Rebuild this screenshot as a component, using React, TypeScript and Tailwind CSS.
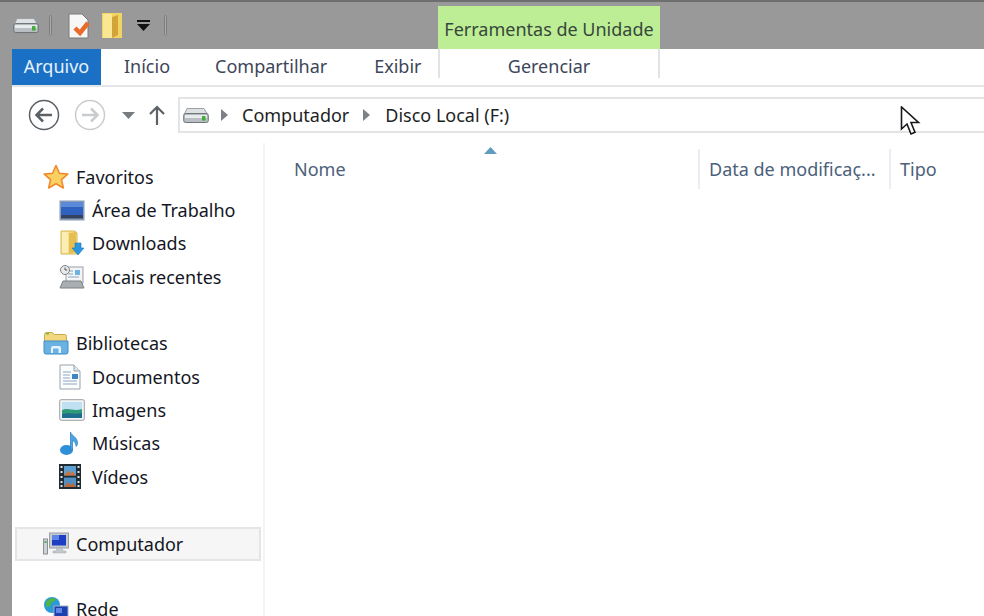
import { ReactNode } from "react";

const DriveIcon = ({ w = 26 }: { w?: number }) => (
  <svg width={w} height={w * 0.62} viewBox="0 0 26 16">
    <path d="M4 1.5h17l4 6.5H1z" fill="#dfe2e4" stroke="#9a9ea2" />
    <rect x="0.7" y="6.5" width="24.6" height="9" rx="2" fill="#b9bec2" stroke="#6d7276" />
    <rect x="2" y="8" width="22" height="3" fill="#e9ecee" />
    <rect x="19" y="9" width="3.5" height="4.5" fill="#3fae3a" />
  </svg>
);

const StarIcon = () => (
  <svg width="26" height="26" viewBox="0 0 26 26">
    <path d="M13 1.5l3.4 7.7 8.4.9-6.3 5.6 1.8 8.3-7.3-4.3-7.3 4.3 1.8-8.3L1.2 10.1l8.4-.9z" fill="#fbd063" stroke="#ef8a2e" strokeWidth="1.6" strokeLinejoin="round" />
  </svg>
);

const DesktopIcon = () => (
  <svg width="26" height="21" viewBox="0 0 26 21">
    <rect x="0.5" y="0.5" width="25" height="20" fill="#8b9cb8" />
    <rect x="2" y="2" width="22" height="13" fill="#2f61c0" />
    <rect x="2" y="2" width="22" height="5" fill="#5d8ad8" />
    <rect x="2" y="15" width="22" height="3.5" fill="#33435f" />
  </svg>
);

const FolderIcon = ({ children }: { children?: ReactNode }) => (
  <svg width="26" height="26" viewBox="0 0 26 26">
    <path d="M2 1h14l2 2v21H2z" fill="#f6df8a" stroke="#d9b95a" />
    <path d="M10 3l7-1v20l-7 2z" fill="#e6bf50" />
    <rect x="3" y="2" width="6" height="21" fill="#fbedb4" />
    {children}
  </svg>
);

const RecentIcon = () => (
  <svg width="26" height="26" viewBox="0 0 26 26">
    <rect x="7" y="3" width="17" height="16" fill="#f2f4f6" stroke="#9aa0a6" />
    <rect x="16" y="6" width="5" height="5" fill="#6fb3e0" />
    <path d="M9 7h5M9 10h5M9 13h11" stroke="#8fa6bb" />
    <circle cx="6" cy="6" r="4.5" fill="#e8eaec" stroke="#7c8187" />
    <path d="M6 3.5V6h2.2" stroke="#555" fill="none" />
    <path d="M4 17h18l3 7H1z" fill="#a9aeb3" stroke="#7d8287" />
  </svg>
);

const LibraryIcon = () => (
  <svg width="26" height="24" viewBox="0 0 26 24">
    <path d="M1.5 3.5a2 2 0 012-2h6l2 2h10a2 2 0 012 2v14h-22z" fill="#f3d77e" stroke="#c8a950" />
    <rect x="3" y="2" width="3" height="1.5" fill="#6fc04a" />
    <path d="M1 10h24v11a2 2 0 01-2 2H3a2 2 0 01-2-2z" fill="#6ab2e2" stroke="#3f8cc4" />
    <path d="M8 22v-5a2 2 0 012-2h6a2 2 0 012 2v5h-2.500v-4.500h-5.500V22z" fill="#e6f3fb" />
  </svg>
);

const DocIcon = () => (
  <svg width="22" height="26" viewBox="0 0 22 26">
    <path d="M1 1h14l6 6v18H1z" fill="#fbfcfd" stroke="#9aa2a9" />
    <path d="M15 1v6h6" fill="#dfe6ec" stroke="#9aa2a9" />
    <path d="M4 8h8M4 11h7M4 14h7M4 17h14M4 20h14" stroke="#8ba7c0" />
    <rect x="13" y="10" width="6" height="5" fill="#3d86c6" />
  </svg>
);

const PictureIcon = () => (
  <svg width="26" height="22" viewBox="0 0 26 22">
    <rect x="0.7" y="0.7" width="24.600" height="20.600" rx="1.500" fill="#f2f3f4" stroke="#9a9ea3" />
    <rect x="3" y="3" width="20" height="16" fill="#bfe0f3" />
    <path d="M3 11c6-3 12 2 20-1v9H3z" fill="#2f9a76" />
    <path d="M3 15c7-2 12 1 20-1v5H3z" fill="#1c6d8e" />
  </svg>
);

const MusicIcon = () => (
  <svg width="22" height="26" viewBox="0 0 22 26">
    <ellipse cx="7.500" cy="20" rx="6.500" ry="5" fill="#2f8fd8" />
    <path d="M11.500 20V2c1 4 7 5 7 11 0 2-.8 3-1.500 3.500.3-3-2-5.500-3.500-6V20z" fill="#4aa3e4" stroke="#2b7dbf" strokeWidth="0.700" />
  </svg>
);

const FilmIcon = () => (
  <svg width="22" height="25" viewBox="0 0 22 25">
    <rect x="0" y="0" width="22" height="25" fill="#1f2b30" />
    <rect x="5" y="2" width="12" height="9.500" fill="#5d9fd0" />
    <path d="M5 11.500l4-5 3 3 2-2 3 4z" fill="#c9743c" />
    <rect x="5" y="13.500" width="12" height="9.500" fill="#4f8fc4" />
    <path d="M5 23l4-5 3 3 2-2 3 4z" fill="#b9683a" />
    {[2, 7, 12, 17, 21].map((y) => (
      <g key={y}>
        <rect x="1.500" y={y} width="2" height="2" fill="#d9e6ea" />
        <rect x="18.500" y={y} width="2" height="2" fill="#d9e6ea" />
      </g>
    ))}
  </svg>
);

const ComputerIcon = () => (
  <svg width="26" height="24" viewBox="0 0 26 24">
    <rect x="0.500" y="7" width="4" height="15" fill="#cdd2d6" stroke="#8a9095" />
    <rect x="1.500" y="9" width="2" height="2" fill="#49b04a" />
    <rect x="6.500" y="1" width="19" height="15" fill="#c6cbd0" stroke="#9aa0a5" />
    <rect x="9" y="3" width="14" height="10.500" fill="#1d3fc4" />
    <rect x="9" y="3" width="7" height="5" fill="#5f86e6" />
    <path d="M14 16h5l1 3h3v2H10v-2h3z" fill="#c4c9cd" stroke="#a0a5aa" strokeWidth="0.500" />
  </svg>
);

const NetworkIcon = () => (
  <svg width="26" height="26" viewBox="0 0 26 26">
    <circle cx="9" cy="9" r="8" fill="#2a9ad8" />
    <path d="M3 6c3-4 7-5 10-3-1 3-4 2-5 5s-3 4-5 2z" fill="#4fb548" />
    <rect x="11" y="10" width="14" height="14" fill="#1d3fb0" stroke="#9fb0c6" />
    <rect x="13" y="12" width="6" height="5" fill="#5f86e6" />
  </svg>
);

const NavItem = ({ icon, label, sub }: { icon: ReactNode; label: string; sub?: boolean }) => (
  <div className={`flex h-[33.400px] items-center ${sub ? "pl-[47px]" : "pl-[31px]"}`}>
    <span className="flex w-[34px] shrink-0 items-center justify-start">{icon}</span>
    <span className={`whitespace-nowrap text-[#14161f] ${sub ? "-ml-[1px]" : "-ml-[1px]"}`}>{label}</span>
  </div>
);

const ColumnHead = ({ label, className }: { label: string; className: string }) => (
  <div className={`flex h-[40px] shrink-0 items-center whitespace-nowrap text-[#4c607a] ${className}`}>{label}</div>
);

export default function App() {
  return (
    <div
      className="relative flex h-[616px] w-[984px] flex-col overflow-hidden bg-[#999999] text-[18px] leading-none"
      style={{ fontFamily: '"Noto Sans", sans-serif' }}
    >
      {/* title bar */}
      <div className="h-[2px] shrink-0 bg-[#6e6e6e]" />
      <div className="flex h-[47px] shrink-0 items-center pl-[13px]">
        <DriveIcon />
        <div className="ml-[10px] h-[21px] w-[3px] rounded-sm border border-[#7d7d7d] bg-[#ababab]" />
        <svg className="ml-[15px]" width="23" height="26" viewBox="0 0 23 26">
          <path d="M2 1h13l6 6v18H2z" fill="#f7f7f7" stroke="#7b7b7b" />
          <path d="M8 15l5 5 8-10" fill="none" stroke="#ea6a2c" strokeWidth="4.500" />
        </svg>
        <svg className="ml-[12px]" width="20" height="26" viewBox="0 0 20 26">
          <rect x="0" y="0" width="20" height="25" fill="#f1d463" />
          <rect x="1" y="1" width="9" height="24" fill="#f9e791" />
          <path d="M10 4l6-2v20l-6 3z" fill="#d3a43a" />
        </svg>
        <svg className="ml-[15px]" width="13" height="12" viewBox="0 0 13 12">
          <rect x="0" y="0" width="13" height="2" fill="#111" />
          <path d="M0 4h13l-6.500 7z" fill="#111" />
        </svg>
        <div className="ml-[14px] h-[21px] w-[3px] rounded-sm border border-[#7d7d7d] bg-[#ababab]" />
      </div>

      <div className="ml-[12px] flex min-h-0 flex-1 flex-col bg-white">
        {/* ribbon tabs */}
        <div className="flex h-[38px] shrink-0 items-stretch border-b-2 border-[#e4e5e6] text-[#3c4658]">
          <div className="flex w-[89px] shrink-0 items-center justify-center bg-[#1a70c5] pb-[2px] text-[#e6f0fa]">Arquivo</div>
          <div className="flex w-[337px] shrink-0 items-center pb-[2px]">
            <span className="ml-[23px]">Início</span>
            <span className="ml-[45px]">Compartilhar</span>
            <span className="ml-[47px]">Exibir</span>
          </div>
          <div className="relative flex w-[222px] shrink-0 items-center justify-center pb-[2px]">
            <div className="absolute -top-[43px] left-0 flex h-[43px] w-full items-center justify-center bg-[#bdee96] pt-[3px] text-[#37473a]">
              Ferramentas de Unidade
            </div>
            <div className="absolute left-0 top-0 h-[29px] w-[2px] bg-[#e2e3e4]" />
            <div className="absolute right-0 top-0 h-[29px] w-[2px] bg-[#e2e3e4]" />
            Gerenciar
          </div>
        </div>

        {/* address row */}
        <div className="flex h-[56px] shrink-0 items-center pl-[16px]">
          <svg width="32" height="32" viewBox="0 0 32 32" fill="none" stroke="#5b6167">
            <circle cx="16" cy="16" r="14.500" strokeWidth="1.500" />
            <path d="M24 16H9M15 9.500L8.500 16l6.500 6.500" strokeWidth="2.500" />
          </svg>
          <svg className="ml-[14px]" width="32" height="32" viewBox="0 0 32 32" fill="none" stroke="#c9cccf">
            <circle cx="16" cy="16" r="14.500" strokeWidth="1.500" />
            <path d="M8 16h15M17 9.500l6.500 6.500-6.500 6.500" strokeWidth="2.500" />
          </svg>
          <svg className="ml-[16px]" width="13" height="7" viewBox="0 0 13 7">
            <path d="M0 0h13L6.500 7z" fill="#777c81" />
          </svg>
          <svg className="ml-[14px]" width="16" height="20" viewBox="0 0 16 20" fill="none" stroke="#5c6268" strokeWidth="2.200">
            <path d="M8 20V2M1 9l7-7 7 7" />
          </svg>
          <div className="ml-[13px] flex h-[36px] flex-1 items-center border-2 border-r-0 border-[#e3e4e5] pl-[3px] text-[#1d1f24]">
            <DriveIcon />
            <svg className="ml-[12px]" width="7" height="12" viewBox="0 0 7 12"><path d="M0 0l7 6-7 6z" fill="#7d8186" /></svg>
            <span className="ml-[14px]">Computador</span>
            <svg className="ml-[14px]" width="7" height="12" viewBox="0 0 7 12"><path d="M0 0l7 6-7 6z" fill="#7d8186" /></svg>
            <span className="ml-[15px]">Disco Local (F:)</span>
          </div>
        </div>

        <div className="flex min-h-0 flex-1">
          {/* navigation pane */}
          <div className="w-[253px] shrink-0 overflow-hidden border-r-2 border-[#f3f4f5] pt-[17px]">
            <NavItem icon={<StarIcon />} label="Favoritos" />
            <NavItem sub icon={<DesktopIcon />} label="Área de Trabalho" />
            <NavItem
              sub
              icon={
                <FolderIcon>
                  <path d="M16 13h6v5h3l-6 7-6-7h3z" fill="#2c97e0" stroke="#1c76bb" strokeWidth="0.600" />
                </FolderIcon>
              }
              label="Downloads"
            />
            <NavItem sub icon={<RecentIcon />} label="Locais recentes" />
            <div className="h-[33px]" />
            <NavItem icon={<LibraryIcon />} label="Bibliotecas" />
            <NavItem sub icon={<DocIcon />} label="Documentos" />
            <NavItem sub icon={<PictureIcon />} label="Imagens" />
            <NavItem sub icon={<MusicIcon />} label="Músicas" />
            <NavItem sub icon={<FilmIcon />} label="Vídeos" />
            <div className="h-[33px]" />
            <div className="ml-[3px] mr-[2px] flex h-[34px] items-center border-2 border-[#e4e5e6] bg-[#f6f6f6] pl-[26px]">
              <span className="flex w-[34px] shrink-0">
                <ComputerIcon />
              </span>
              <span className="-ml-[1px] whitespace-nowrap text-[#14161f]">Computador</span>
            </div>
            <div className="h-[32px]" />
            <NavItem icon={<NetworkIcon />} label="Rede" />
          </div>

          {/* file list header */}
          <div className="flex h-[48px] min-w-0 flex-1 items-end pb-[2px] pl-[29px]">
            <ColumnHead label="Nome" className="w-[404px]" />
            <div className="h-[40px] w-[2px] shrink-0 bg-[#e8eef4]" />
            <ColumnHead label="Data de modificaç..." className="w-[189px] pl-[9px]" />
            <div className="h-[40px] w-[2px] shrink-0 bg-[#e8eef4]" />
            <ColumnHead label="Tipo" className="pl-[9px]" />
          </div>
        </div>
      </div>

      {/* sort arrow */}
      <svg className="absolute left-[484px] top-[147px]" width="13" height="7" viewBox="0 0 13 7">
        <path d="M6.500 0L13 7H0z" fill="#5f9cc0" />
      </svg>
      {/* mouse cursor */}
      <svg className="absolute left-[900px] top-[106px]" width="22" height="31" viewBox="0 0 22 31">
        <path d="M1.500 1v22l5.500-5 4 10 4-1.700-4-9.800h7.500z" fill="#fff" stroke="#16181b" strokeWidth="1.600" strokeLinejoin="miter" />
      </svg>
    </div>
  );
}
